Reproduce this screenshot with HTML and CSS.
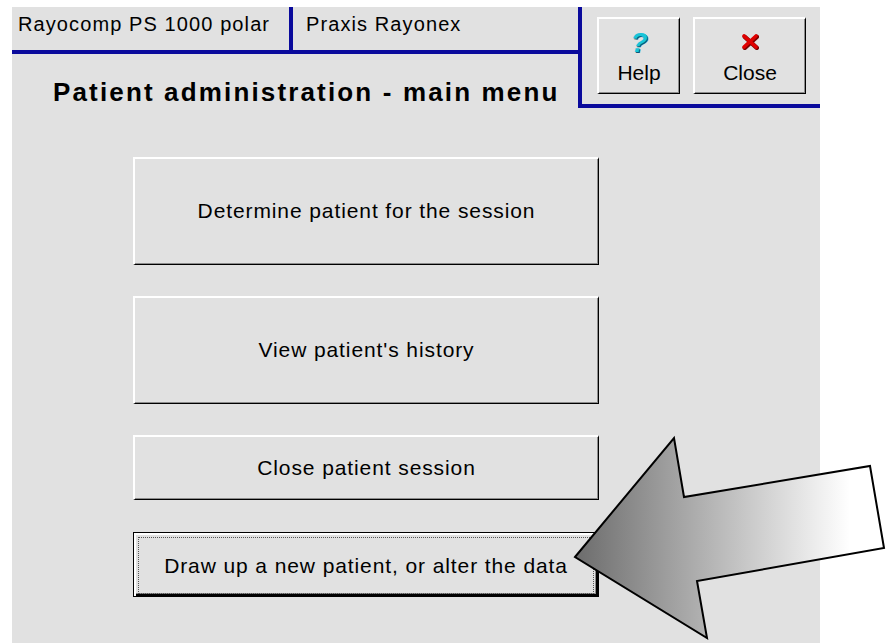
FILE: index.html
```html
<!DOCTYPE html>
<html lang="en">
<head>
  <meta charset="UTF-8">
  <title>Patient administration - main menu</title>
  <link rel="stylesheet" href="styles.css">
</head>
<body>

  <div class="panel">
    <div class="top">
      <div class="head">
        <div class="tabs">
          <div class="tab tab-first">Rayocomp PS 1000 polar</div>
          <div class="tab tab-second">Praxis Rayonex</div>
        </div>
        <h1 class="title">Patient administration - main menu</h1>
      </div>

      <div class="tools">
        <button class="btn tool tool-help">
          <span class="icon-help">?</span>
          <span class="tool-label">Help</span>
        </button>
        <button class="btn tool tool-close">
          <svg class="icon-close" width="18" height="17" viewBox="0 0 18 17">
            <path d="M3 3 L15 14 M15 3 L3 14" stroke="#7a0000" stroke-width="4.5" stroke-linecap="round" transform="translate(0.8,0.8)"/>
            <path d="M3 3 L15 14 M15 3 L3 14" stroke="#e00000" stroke-width="3.6" stroke-linecap="round"/>
          </svg>
          <span class="tool-label">Close</span>
        </button>
      </div>
    </div>

    <div class="menu">
      <button class="btn menu-btn tall">Determine patient for the session</button>
      <button class="btn menu-btn tall">View patient's history</button>
      <button class="btn menu-btn">Close patient session</button>
      <button class="btn menu-btn default"><span class="focus">Draw up a new patient, or alter the data</span></button>
    </div>
  </div>

  <!-- pointer arrow over the last button -->
  <svg class="arrow" width="887" height="643" viewBox="0 0 887 643">
    <defs>
      <linearGradient id="arrow-fill" gradientUnits="userSpaceOnUse" x1="575" y1="0" x2="850" y2="0">
        <stop offset="0" stop-color="#6c6c6c"/>
        <stop offset="0.35" stop-color="#a0a0a0"/>
        <stop offset="1" stop-color="#ffffff"/>
      </linearGradient>
    </defs>
    <polygon points="575,557 674,438 684,497 870,466 884,548 697,581 707,638"
             fill="url(#arrow-fill)" stroke="#000" stroke-width="2" stroke-linejoin="miter"/>
  </svg>

</body>
</html>
```

FILE: styles.css
```css
html, body {
  margin: 0;
  padding: 0;
  background: #fff;
  font-family: "Liberation Sans", Arial, sans-serif;
  color: #000;
  overflow: hidden;
}

body {
  position: relative;
  width: 887px;
  height: 643px;
}

.panel {
  margin: 7px 0 0 12px;
  width: 808px;
  height: 636px;
  background: #e1e1e1;
}

.top {
  display: flex;
  height: 101px;
}

.head {
  width: 566px;
}

.tabs {
  display: flex;
  height: 43px;
  border-bottom: 4px solid #0a0a9c;
}

.tab {
  font-size: 20px;
  letter-spacing: 1.1px;
  line-height: 34px;
  white-space: nowrap;
}

.tab-first {
  width: 271px;
  padding-left: 6px;
  border-right: 4px solid #0a0a9c;
}

.tab-second {
  flex: 1;
  padding-left: 13px;
}

.title {
  margin: 0;
  padding: 23px 0 0 41px;
  font-size: 26px;
  font-weight: bold;
  letter-spacing: 2.15px;
  line-height: 30px;
  white-space: nowrap;
}

.tools {
  flex: 1;
  display: flex;
  gap: 13px;
  padding: 10px 0 0 15px;
  border-left: 4px solid #0a0a9c;
  border-bottom: 4px solid #0a0a9c;
}

.btn {
  box-sizing: border-box;
  margin: 0;
  padding: 0;
  background: #e1e1e1;
  font-family: "Liberation Sans", Arial, sans-serif;
  color: #000;
  border-top: 2px solid #fff;
  border-left: 2px solid #fff;
  border-right: 1px solid #000;
  border-bottom: 1px solid #000;
  box-shadow: inset -1px -1px 0 #8c8c8c;
}

.tool {
  height: 77px;
  display: flex;
  flex-direction: column;
  align-items: center;
  justify-content: flex-start;
  padding-top: 14px;
}

.tool-help {
  width: 83px;
}

.tool-close {
  width: 113px;
}

.icon-help {
  display: block;
  height: 20px;
  font-size: 28px;
  font-weight: bold;
  font-style: italic;
  line-height: 19px;
  color: #18c4d8;
  text-shadow: 1px 1px 0 #0a5a78;
}

.icon-close {
  display: block;
  margin-bottom: 3px;
}

.tool-label {
  margin-top: 9px;
  font-size: 21px;
  line-height: 22px;
}

.menu {
  display: flex;
  flex-direction: column;
  gap: 31px;
  padding: 49px 0 0 121px;
}

.menu-btn {
  width: 466px;
  height: 65px;
  padding-bottom: 1px;
  font-size: 21px;
  letter-spacing: 0.9px;
}

.menu-btn.tall {
  height: 108px;
}

.menu-btn.default {
  margin-top: 1px;
  padding: 4px;
  border: 1px solid #000;
  box-shadow: inset 2px 2px 0 #fff, inset -2px -2px 0 #000, inset -3px -3px 0 #8c8c8c;
}

.focus {
  display: flex;
  align-items: center;
  justify-content: center;
  height: 100%;
  border: 1px dotted #555;
}

.arrow {
  position: absolute;
  left: 0;
  top: 0;
  pointer-events: none;
}
```
